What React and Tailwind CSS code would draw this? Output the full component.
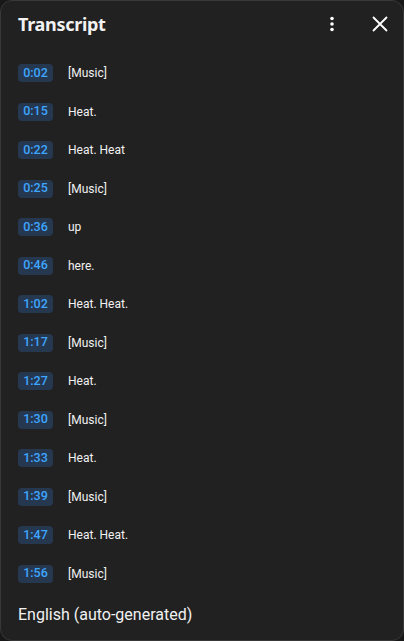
import React from 'react';

// transcript lines as in the reference
const LINES = [
  { t: '0:02', text: '[Music]' },
  { t: '0:15', text: 'Heat.' },
  { t: '0:22', text: 'Heat. Heat' },
  { t: '0:25', text: '[Music]' },
  { t: '0:36', text: 'up' },
  { t: '0:46', text: 'here.' },
  { t: '1:02', text: 'Heat. Heat.' },
  { t: '1:17', text: '[Music]' },
  { t: '1:27', text: 'Heat.' },
  { t: '1:30', text: '[Music]' },
  { t: '1:33', text: 'Heat.' },
  { t: '1:39', text: '[Music]' },
  { t: '1:47', text: 'Heat. Heat.' },
  { t: '1:56', text: '[Music]' },
];

export default function App() {
  return (
    <div className="w-[404px] h-[641px] bg-[#181818]" style={{ fontFamily: 'Roboto, "Liberation Sans", sans-serif' }}>
      <div className="h-full flex flex-col bg-[#212121] rounded-xl border border-[#383838]">
        {/* header */}
        <div className="flex items-center h-[45px] pl-[17px] pr-[11px] pt-[2px]">
          <h2 className="flex-1 text-[18px] font-bold text-[#f1f1f1] tracking-[-0.3px]" style={{ fontFamily: '"Noto Sans", sans-serif' }}>
            Transcript
          </h2>
          <button className="w-[24px] h-[24px] flex items-center justify-center text-white mr-[24px]">
            <svg width="24" height="24" viewBox="0 0 24 24" fill="currentColor">
              <circle cx="12" cy="6.5" r="1.8" />
              <circle cx="12" cy="12" r="1.8" />
              <circle cx="12" cy="17.5" r="1.8" />
            </svg>
          </button>
          <button className="w-[24px] h-[24px] flex items-center justify-center text-white">
            <svg width="24" height="24" viewBox="0 0 24 24" fill="none" stroke="currentColor" strokeWidth="1.8">
              <path d="M5 5 L19 19 M19 5 L5 19" />
            </svg>
          </button>
        </div>

        {/* segments */}
        <div className="flex-1 pt-[9px]">
          {LINES.map((l) => (
            <div key={l.t} className="flex items-center h-[38.5px] pl-[17px]">
              <span className="w-[35px] h-[18px] flex items-center justify-center rounded-[4px] bg-[#263850] text-[#3ea6ff] text-[12.5px] font-medium">
                {l.t}
              </span>
              <span className="ml-[15px] text-[12px] text-[#f1f1f1]">{l.text}</span>
            </div>
          ))}
        </div>

        {/* footer */}
        <div className="h-[48px] flex items-center pl-[17px] pb-[4px] text-[16px] text-[#f1f1f1]">
          English (auto-generated)
        </div>
      </div>
    </div>
  );
}
